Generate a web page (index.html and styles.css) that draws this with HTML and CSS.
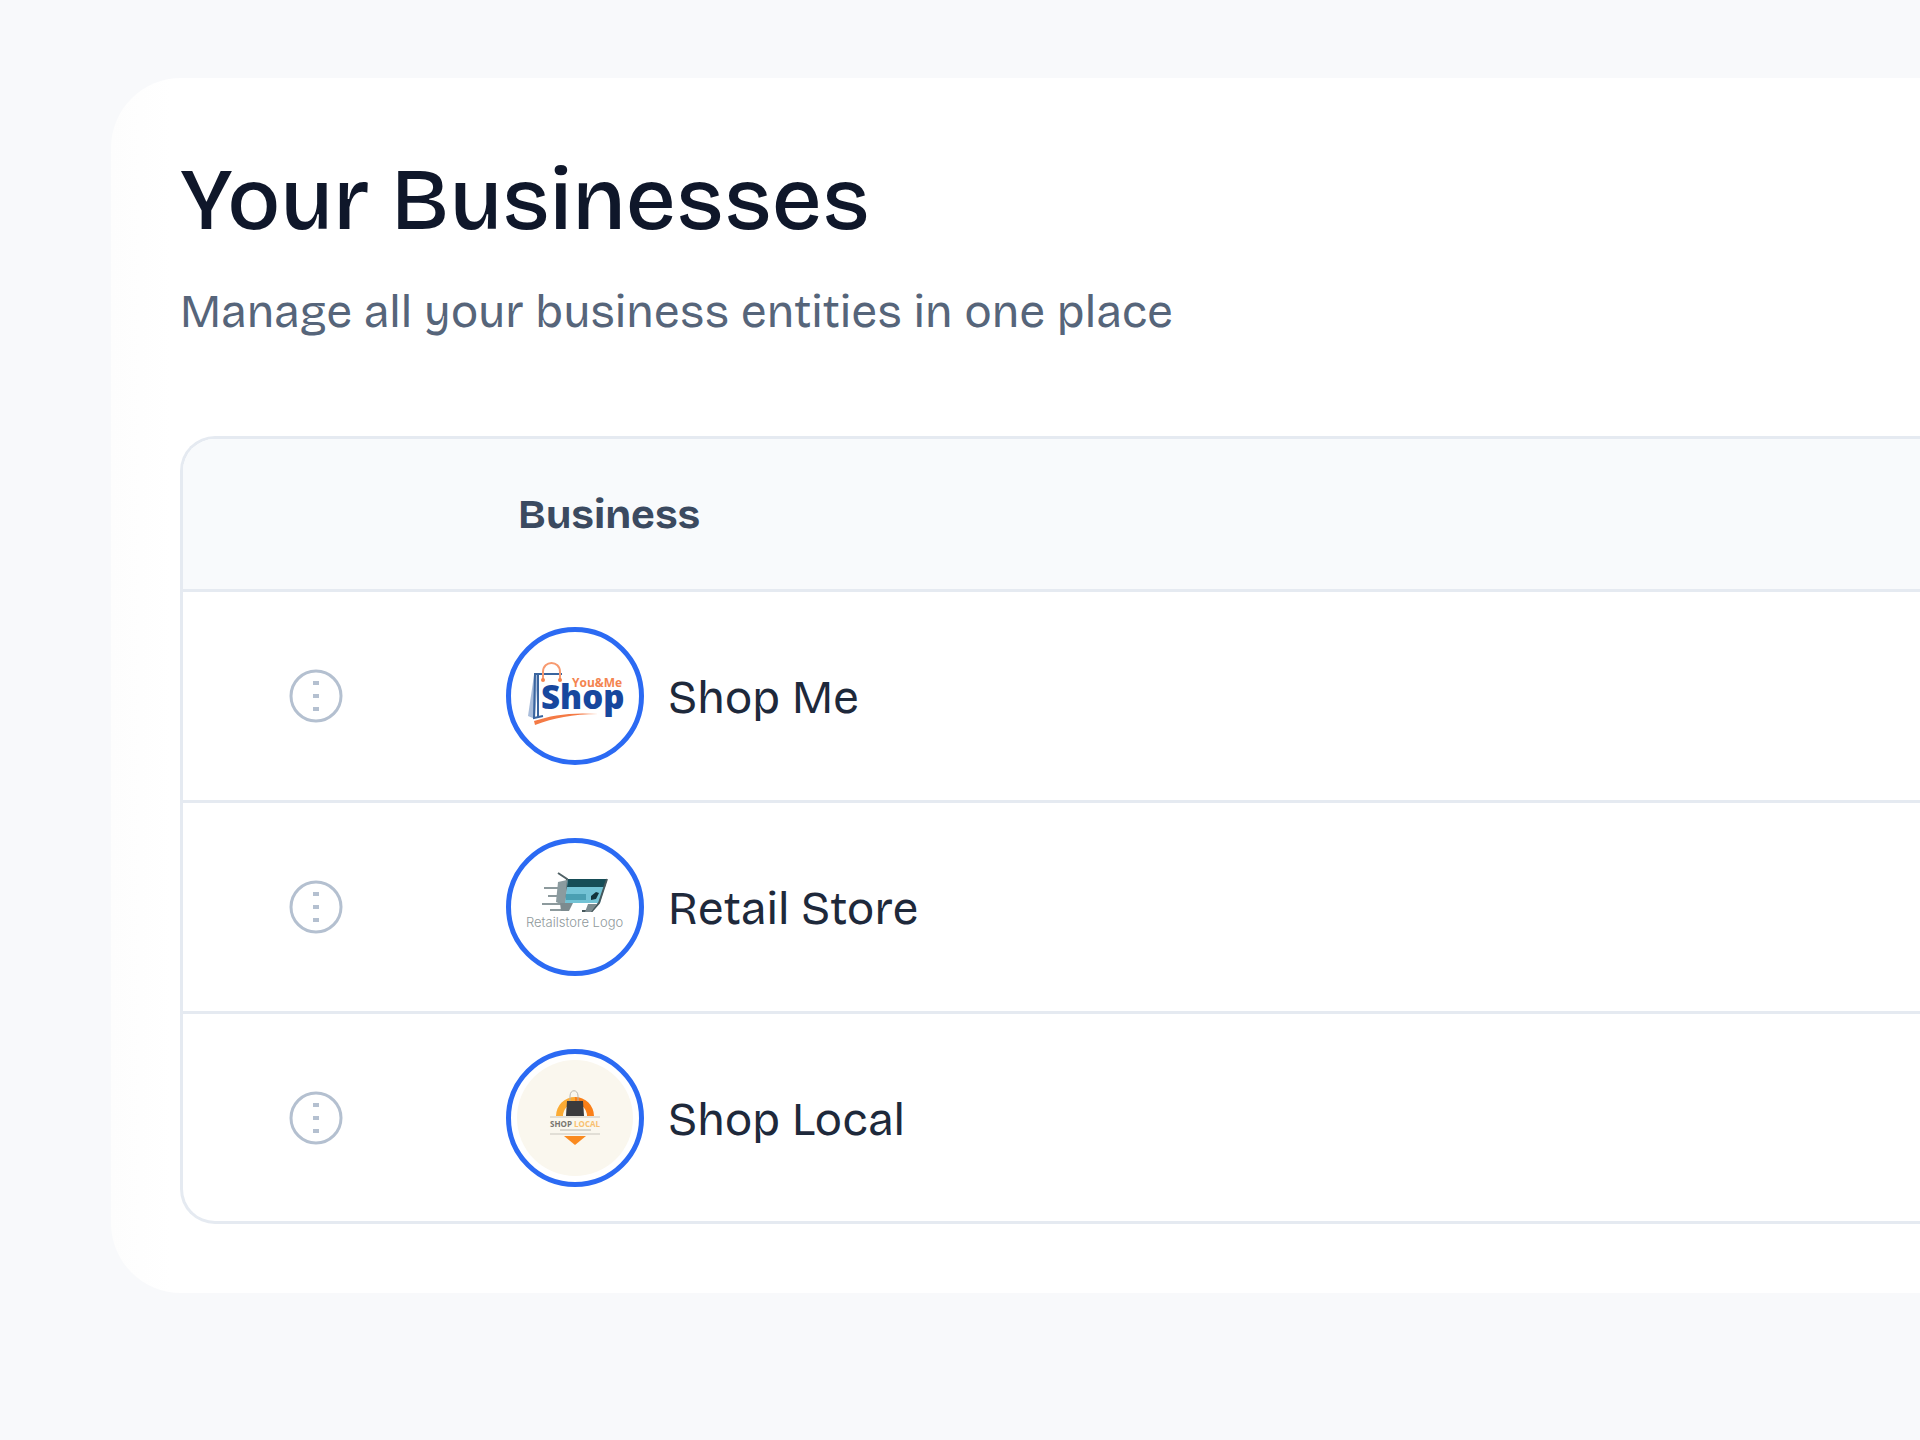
FILE: index.html
```html
<!DOCTYPE html>
<html lang="en">
<head>
    <meta charset="UTF-8">
    <meta name="viewport" content="width=device-width, initial-scale=1.0">
    <title>Your Businesses</title>
    <link rel="stylesheet" href="styles.css">
</head>
<body>
    <main class="card">
        <h1 class="card-title">Your Businesses</h1>
        <p class="card-subtitle">Manage all your business entities in one place</p>

        <div class="table-wrap">
            <table class="business-table">
                <thead>
                    <tr>
                        <th class="col-actions"></th>
                        <th class="col-business" scope="col">Business</th>
                    </tr>
                </thead>
                <tbody>
                    <tr>
                        <td class="col-actions">
                            <button class="more-button" type="button" aria-label="Actions for Shop Me">
                                <svg viewBox="0 0 54 54" aria-hidden="true">
                                    <circle cx="27" cy="27" r="25"/>
                                    <path d="M24 14h6M24 27h6M24 40h6"/>
                                </svg>
                            </button>
                        </td>
                        <td>
                            <div class="business">
                                <span class="avatar">
                                    <svg viewBox="0 0 116 116" aria-hidden="true">
                                        <path d="M17 37 11 78l7 3 3-44z" fill="#a9bddb"/>
                                        <path d="M45 36H18l-1 44 9-2" fill="none" stroke="#3a659f" stroke-width="2"/>
                                        <path d="M21 37v42" stroke="#3a659f" stroke-width="2"/>
                                        <path d="M26 42v-8c0-12 17-12 17 0v8" fill="none" stroke="#f79a70" stroke-width="2"/>
                                        <circle cx="26" cy="42" r="2" fill="#f4844f"/>
                                        <circle cx="43" cy="42" r="2" fill="#f4844f"/>
                                        <path d="M17 83c18-6 38-9 64-7-26 0-44 4-63 11z" fill="#f47a45"/>
                                        <text class="logo-shop" x="24" y="71">Shop</text>
                                        <text class="logo-youme" x="55" y="49">You&amp;Me</text>
                                    </svg>
                                </span>
                                <span class="business-name">Shop Me</span>
                            </div>
                        </td>
                    </tr>
                    <tr>
                        <td class="col-actions">
                            <button class="more-button" type="button" aria-label="Actions for Retail Store">
                                <svg viewBox="0 0 54 54" aria-hidden="true">
                                    <circle cx="27" cy="27" r="25"/>
                                    <path d="M24 14h6M24 27h6M24 40h6"/>
                                </svg>
                            </button>
                        </td>
                        <td>
                            <div class="business">
                                <span class="avatar">
                                    <svg viewBox="0 0 116 116" aria-hidden="true">
                                        <path d="M27 39h17M31 47h13M25 55h19M33 61h16" stroke="#8d9a9d" stroke-width="2"/>
                                        <path d="M41 24l9 6-3 27" fill="none" stroke="#526367" stroke-width="2"/>
                                        <path d="M41 33l9-2-2 26-9-4z" fill="#8b9b9f"/>
                                        <path d="M51 30h39l-7 24H48z" fill="#73c3d5"/>
                                        <path d="M51 30h39l-2 8H50z" fill="#164d57"/>
                                        <path d="M49 45h20v6H49z" fill="#4a9fb2"/>
                                        <path d="M90 30l-8 24-7 8H65" fill="none" stroke="#46585c" stroke-width="2"/>
                                        <path d="M74 47l5-4 3 1-3 6-5 1z" fill="#12343c"/>
                                        <path d="M43 54h13l-4 8h-8zM71 55h9l-6 8h-6z" fill="#7c8b8f"/>
                                        <text class="logo-retail" x="9" y="78">Retailstore Logo</text>
                                    </svg>
                                </span>
                                <span class="business-name">Retail Store</span>
                            </div>
                        </td>
                    </tr>
                    <tr>
                        <td class="col-actions">
                            <button class="more-button" type="button" aria-label="Actions for Shop Local">
                                <svg viewBox="0 0 54 54" aria-hidden="true">
                                    <circle cx="27" cy="27" r="25"/>
                                    <path d="M24 14h6M24 27h6M24 40h6"/>
                                </svg>
                            </button>
                        </td>
                        <td>
                            <div class="business">
                                <span class="avatar avatar-cream">
                                    <svg viewBox="0 0 116 116" aria-hidden="true">
                                        <path d="M39 56a19 19 0 0 1 19-19v6a13 13 0 0 0-12 13z" fill="#fbab34"/>
                                        <path d="M58 37a19 19 0 0 1 19 19h-7a13 13 0 0 0-12-13z" fill="#fa7f17"/>
                                        <path d="M53 41v-5c0-7 8-7 8 0v5" fill="none" stroke="#b9b6ae" stroke-width="1"/>
                                        <path d="M50 41h16l1 15H49z" fill="#3b3b3d"/>
                                        <path d="M33 57h50M33 74h50" stroke="#c9c6be" stroke-width="1"/>
                                        <path d="M43 70h31" stroke="#d8d5cc" stroke-width="2"/>
                                        <path d="M47 76h22l-11 9z" fill="#fa8a1f"/>
                                        <text class="logo-local" x="33" y="67">SHOP <tspan fill="#f8c070">LOCAL</tspan></text>
                                    </svg>
                                </span>
                                <span class="business-name">Shop Local</span>
                            </div>
                        </td>
                    </tr>
                </tbody>
            </table>
        </div>
    </main>
</body>
</html>
```
FILE: styles.css
```css
* {
    box-sizing: border-box;
}
body {
    margin: 0;
    padding: 78px 0 78px 111px;
    background-color: #f8f9fb;
    color: #0f172a;
    font-family: "Bricolage Grotesque", Inter, sans-serif;
    font-optical-sizing: none;
}
/* The card and its table run off the right edge of the window */
.card {
    padding: 70px 0 69px 69px;
    border-radius: 70px 0 0 70px;
    background: linear-gradient(to right, #fdfdfd, #fff 60px);
}
.card-title {
    margin: 0;
    font-size: 88px;
    line-height: 104px;
    font-weight: 500;
}
.card-subtitle {
    margin: 28px 0 0;
    color: #56657a;
    font-size: 46px;
    line-height: 64px;
}
.table-wrap {
    margin-top: 92px;
    border: 3px solid #e5eaf1;
    border-right: none;
    border-radius: 35px 0 0 35px;
    overflow: hidden;
}
.business-table {
    width: 100%;
    border-collapse: separate;
    border-spacing: 0;
    table-layout: fixed;
}
.business-table th {
    height: 153px;
    padding: 0 0 0 70px;
    background-color: #f8fafc;
    border-bottom: 3px solid #e5eaf1;
    color: #3b4a60;
    font-size: 41px;
    font-weight: 700;
    text-align: left;
}
.business-table td {
    height: 211px;
    padding: 0 0 0 58px;
    border-bottom: 3px solid #e5eaf1;
}
.business-table tr:last-child td {
    height: 207px;
    border-bottom: none;
}
.business-table .col-actions {
    width: 265px;
    padding: 0;
    text-align: center;
}
.more-button {
    width: 54px;
    height: 54px;
    padding: 0;
    border: none;
    background: none;
    cursor: pointer;
    vertical-align: middle;
}
.more-button svg {
    display: block;
    fill: none;
    stroke: #b4c0d0;
    stroke-width: 3;
}
.more-button path {
    stroke-width: 4;
}
.business {
    display: flex;
    align-items: center;
    gap: 24px;
}
.avatar {
    flex: none;
    width: 138px;
    height: 138px;
    padding: 6px;
    border: 5px solid #2b6af3;
    border-radius: 50%;
    background-color: #fff;
}
.avatar svg {
    display: block;
    width: 100%;
    border-radius: 50%;
}
.avatar-cream svg {
    background-color: #faf7ee;
}
.business-name {
    padding-top: 4px;
    color: #1e293b;
    font-size: 46px;
    line-height: 64px;
}
.logo-shop {
    fill: #17479e;
    font: 800 33px "Open Sans", sans-serif;
}
.logo-youme {
    fill: #f4844f;
    font: 700 12px "Open Sans", sans-serif;
}
.logo-retail {
    fill: #8f999c;
    font: 300 13px Inter, sans-serif;
}
.logo-local {
    fill: #77756f;
    font: 700 8px "Open Sans", sans-serif;
}
```
